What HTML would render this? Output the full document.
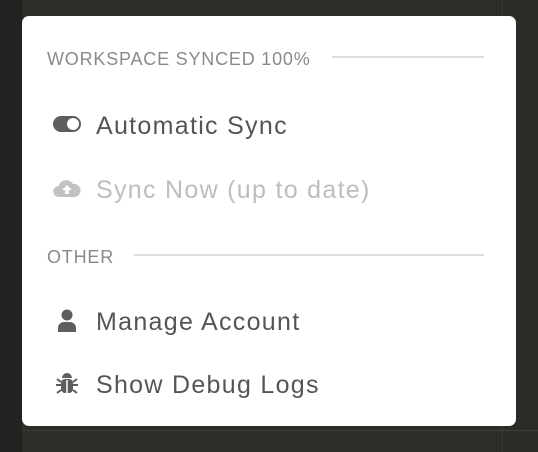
<!DOCTYPE html>
<html><head><style>
body{margin:0;width:538px;height:452px;background:#2c2c28;position:relative;overflow:hidden;font-family:"Liberation Sans",sans-serif}
.l{position:absolute;left:0;top:0;width:22px;height:452px;background:#222220}
.r{position:absolute;left:502px;top:0;width:36px;height:452px;background:#2a2a27;border-left:1px solid #3a3a36}
.b{position:absolute;left:22px;top:430px;width:516px;height:1px;background:#3e3e3a}
.p{position:absolute;left:22px;top:16px;width:494px;height:410px;background:#fff;border-radius:7px}
.h{position:absolute;left:25px;font-size:18px;letter-spacing:0.8px;color:#8a8a8a;line-height:20px}
.ln{position:absolute;height:2px;background:#dcdcdc}
.i{position:absolute;left:74px;font-size:25px;letter-spacing:1.3px;color:#555;line-height:28px}
svg{position:absolute}
</style></head><body>
<div class="l"></div><div class="r"></div><div class="b"></div>
<div class="p">
<div class="h" style="top:33px">WORKSPACE SYNCED 100%</div>
<div class="ln" style="left:310px;width:152px;top:40px"></div>
<div class="i" style="top:96px">Automatic Sync</div>
<div class="i" style="top:160px;color:#bdbdbd">Sync Now (up to date)</div>
<div class="h" style="top:231px">OTHER</div>
<div class="ln" style="left:112px;width:350px;top:238px"></div>
<div class="i" style="top:292px">Manage Account</div>
<div class="i" style="top:355px">Show Debug Logs</div>
<svg style="left:30px;top:99px" width="30" height="18" viewBox="0 0 30 18"><rect x="1" y="1" width="28" height="16" rx="8" fill="#5e5e5e"/><circle cx="21" cy="9" r="6" fill="#fff"/></svg>
<svg style="left:31px;top:162px" width="28" height="20" viewBox="0 0 28 20"><path d="M6 19a5.5 5.5 0 0 1-.5-11A8 8 0 0 1 20 6a6.5 6.5 0 0 1 2 13z" fill="#c2c2c2"/><path d="M14 7l-5 5h3v4h4v-4h3z" fill="#fff"/></svg>
<svg style="left:35px;top:293px" width="20" height="24" viewBox="0 0 20 24"><circle cx="10" cy="6" r="5.5" fill="#5e5e5e"/><path d="M1 23v-4a6 6 0 0 1 6-6h6a6 6 0 0 1 6 6v4z" fill="#5e5e5e"/></svg>
<svg style="left:33px;top:355px" width="24" height="26" viewBox="0 0 24 26"><path d="M7 7a5 5 0 0 1 10 0z" fill="#5e5e5e"/><rect x="6" y="8" width="12" height="14" rx="4" fill="#5e5e5e"/><path d="M12 9v13" stroke="#fff" stroke-width="1.5"/><path d="M1 14h5M18 14h5M2 8l4 3M22 8l-4 3M2 22l4-3M22 22l-4-3" stroke="#5e5e5e" stroke-width="2"/></svg>
</div>
</body></html>
